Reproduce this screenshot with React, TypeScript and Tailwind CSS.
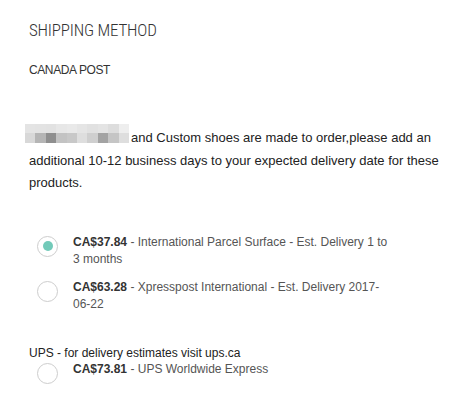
import React from "react";

// pixelated (blurred-out) brand name in front of the notice text
const blurTop = ["bg-[#e4e4e4]", "bg-[#e3e3e3]", "bg-[#e2e2e2]", "bg-[#e7e7e7]", "bg-[#e9e9e9]", "bg-[#e5e5e5]", "bg-[#e1e1e1]", "bg-[#e4e4e4]", "bg-[#dddddd]", "bg-[#eeeeee]"];
const blurBottom = ["bg-[#d8d8d8]", "bg-[#b5b5b5]", "bg-[#8f8f8f]", "bg-[#c3c3c3]", "bg-[#c8c8c8]", "bg-[#dedede]", "bg-[#cfcfcf]", "bg-[#a3a3a3]", "bg-[#c5c5c5]", "bg-[#dedede]"];

interface OptionProps {
    checked?: boolean;
    price: string;
    children: React.ReactNode;
}

const RadioOption = ({ checked, price, children }: OptionProps) => (
    <label className="flex items-start gap-[15px] pl-[8px]">
        <span className="mt-[2px] flex h-[21px] w-[21px] shrink-0 items-center justify-center rounded-full border border-[#cdcdcd] bg-white">
            {checked && <span className="h-[10px] w-[10px] rounded-full bg-[#72cab9]" />}
        </span>
        <span className="w-[320px] text-[12px] leading-[17.5px] text-[#555]">
            <span className="font-bold text-[#333]">{price}</span> - {children}
        </span>
    </label>
);

export default function App() {
    return (
        <div className="min-h-[415px] w-[460px] bg-white pl-[29px] pt-[18px] font-['Liberation_Sans',Arial,sans-serif] text-[#222]">
            <h2 className="font-['Roboto_Condensed',Roboto,sans-serif] text-[17px] leading-[24px] font-light tracking-[-0.2px] text-[#333]">
                SHIPPING METHOD
            </h2>
            <div className="mt-[19px] text-[12px] leading-[18px] tracking-[-0.4px] text-[#333]">CANADA POST</div>

            <p className="mt-[48px] w-[414px] text-[13px] leading-[22.5px] text-[#222]">
                <span className="-ml-[4px] mr-[2px] -mt-[4px] inline-block h-[19px] w-[104px] overflow-hidden align-[-1px]">
                    <span className="flex h-[9px]">
                        {blurTop.map((c, i) => (
                            <span key={i} className={`h-full flex-1 ${c}`} />
                        ))}
                    </span>
                    <span className="flex h-[10px]">
                        {blurBottom.map((c, i) => (
                            <span key={i} className={`h-full flex-1 ${c}`} />
                        ))}
                    </span>
                </span>
                and Custom shoes are made to order,please add an additional 10-12 business days to your expected delivery date for these products.
            </p>

            <div className="mt-[39px] flex flex-col gap-[10px]">
                <RadioOption checked price="CA$37.84">
                    International Parcel Surface - Est. Delivery 1 to 3 months
                </RadioOption>
                <RadioOption price="CA$63.28">
                    Xpresspost International - Est. Delivery 2017-<wbr />06-22
                </RadioOption>
            </div>

            <div className="mt-[31px] text-[12px] leading-[16px] text-[#222]">UPS - for delivery estimates visit ups.ca</div>
            <RadioOption price="CA$73.81">UPS Worldwide Express</RadioOption>
        </div>
    );
}
